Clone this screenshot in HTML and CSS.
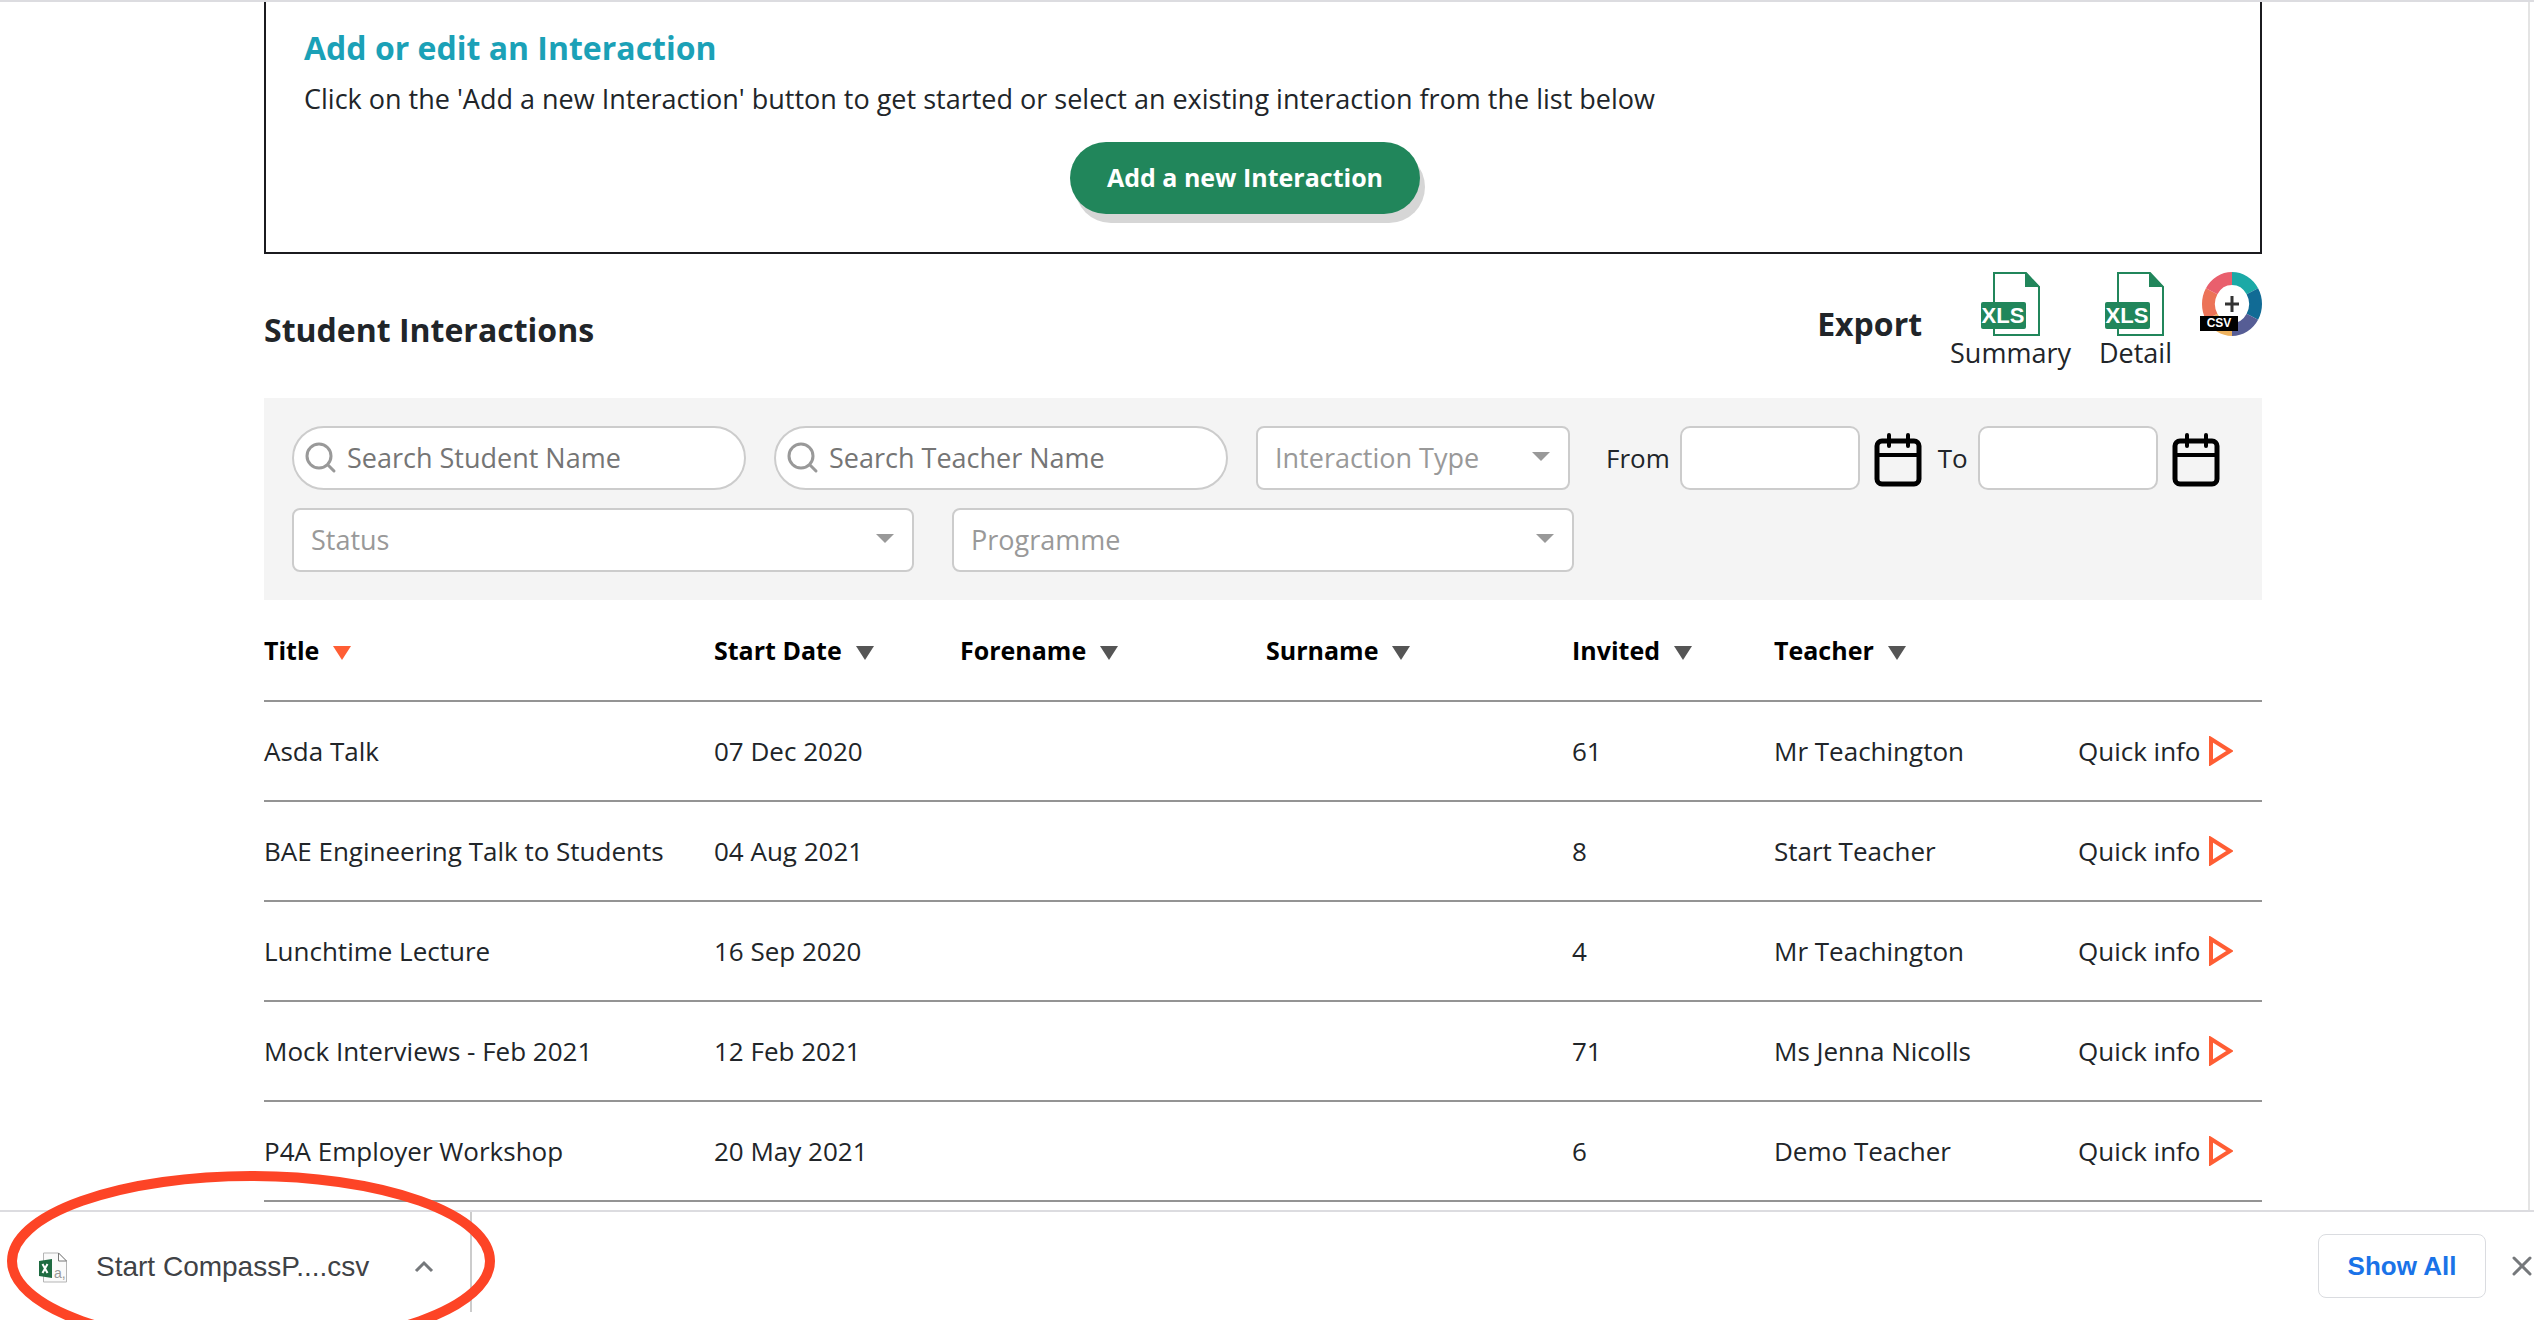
FILE: index.html
```
<!DOCTYPE html>
<html lang="en">
<head>
	<meta charset="UTF-8">
	<title>Student Interactions</title>
	<link rel="stylesheet" href="styles.css">
</head>
<body>
	<svg class="sprite" aria-hidden="true">
		<symbol id="search" viewBox="0 0 32 32">
			<circle cx="14" cy="14" r="12" fill="none" stroke="#999" stroke-width="3"/>
			<path d="M23 23l6 6" stroke="#999" stroke-width="3" stroke-linecap="round"/>
		</symbol>
		<symbol id="calendar" viewBox="0 0 48 54">
			<rect x="3" y="8" width="42" height="43" rx="5" fill="none" stroke="#000" stroke-width="5"/>
			<path d="M3 22h42M15 2v11M34 2v11" fill="none" stroke="#000" stroke-width="4" stroke-linecap="round"/>
		</symbol>
		<symbol id="play" viewBox="0 0 24 30">
			<path d="M2 3l19 12L2 27z" fill="#fff" stroke="#ff5e34" stroke-width="4"/>
		</symbol>
	</svg>

	<main class="page">
		<div class="container">
			<section class="intro">
				<h2>Add or edit an Interaction</h2>
				<p>Click on the 'Add a new Interaction' button to get started or select an existing interaction from the list below</p>
				<button type="button" class="btn-add">Add a new Interaction</button>
			</section>

			<div class="list-head">
				<h2>Student Interactions</h2>
				<div class="export">
					<h3>Export</h3>
					<a href="#" class="export-link">
						<svg class="icon-xls" viewBox="0 0 60 64">
							<path d="M13 1h32l13 14v48H13z" fill="#fff" stroke="#21865b" stroke-width="2"/>
							<path d="M44 0v15h15z" fill="#21865b"/>
							<rect x="0" y="30" width="45" height="27" rx="2" fill="#21865b"/>
							<text x="22" y="51" text-anchor="middle" class="xls-text">XLS</text>
						</svg>
						Summary
					</a>
					<a href="#" class="export-link">
						<svg class="icon-xls" viewBox="0 0 60 64">
							<path d="M13 1h32l13 14v48H13z" fill="#fff" stroke="#21865b" stroke-width="2"/>
							<path d="M44 0v15h15z" fill="#21865b"/>
							<rect x="0" y="30" width="45" height="27" rx="2" fill="#21865b"/>
							<text x="22" y="51" text-anchor="middle" class="xls-text">XLS</text>
						</svg>
						Detail
					</a>
					<a href="#" aria-label="Export CSV">
						<svg class="icon-csv" viewBox="0 0 62 64">
							<g fill="none" stroke-width="13">
								<path d="M32 6.500A23.500 25.500 0 0 1 52.350 19.250" stroke="#1ba9a6"/>
								<path d="M52.350 19.250A23.500 25.500 0 0 1 52.350 44.750" stroke="#116b95"/>
								<path d="M52.350 44.750A23.500 25.500 0 0 1 32 57.500" stroke="#565d95"/>
								<path d="M32 57.500A23.500 25.500 0 0 1 11.650 44.750" stroke="#eeb25f"/>
								<path d="M11.650 44.750A23.500 25.500 0 0 1 11.650 19.250" stroke="#ec7357"/>
								<path d="M11.650 19.250A23.500 25.500 0 0 1 32 6.500" stroke="#e95f6d"/>
							</g>
							<path d="M32 24v16M25 32h14" stroke="#333" stroke-width="3"/>
							<rect x="0" y="44" width="38" height="15"/>
							<text x="19" y="55" text-anchor="middle" class="csv-text">CSV</text>
						</svg>
					</a>
				</div>
			</div>

			<form class="filters">
				<div class="filter-row">
					<label class="search">
						<svg class="icon-search"><use href="#search"/></svg>
						<input type="text" placeholder="Search Student Name" aria-label="Search Student Name">
					</label>
					<label class="search">
						<svg class="icon-search"><use href="#search"/></svg>
						<input type="text" placeholder="Search Teacher Name" aria-label="Search Teacher Name">
					</label>
					<div class="select select-type">
						<select aria-label="Interaction Type"><option>Interaction Type</option></select>
					</div>
					<div class="dates">
						<label for="from">From</label>
						<input type="text" id="from">
						<button type="button" aria-label="Pick from date"><svg class="icon-calendar"><use href="#calendar"/></svg></button>
						<label for="to">To</label>
						<input type="text" id="to">
						<button type="button" aria-label="Pick to date"><svg class="icon-calendar"><use href="#calendar"/></svg></button>
					</div>
				</div>
				<div class="filter-row filter-row-wide">
					<div class="select">
						<select aria-label="Status"><option>Status</option></select>
					</div>
					<div class="select">
						<select aria-label="Programme"><option>Programme</option></select>
					</div>
				</div>
			</form>

			<table class="interactions">
				<colgroup>
					<col class="col-title">
					<col class="col-date">
					<col class="col-name">
					<col class="col-name">
					<col class="col-invited">
					<col class="col-teacher">
					<col>
				</colgroup>
				<thead>
					<tr>
						<th class="sorted">Title</th>
						<th>Start Date</th>
						<th>Forename</th>
						<th>Surname</th>
						<th>Invited</th>
						<th>Teacher</th>
						<td></td>
					</tr>
				</thead>
				<tbody>
					<tr>
						<td>Asda Talk</td><td>07 Dec 2020</td><td></td><td></td><td>61</td><td>Mr Teachington</td>
						<td><a href="#" class="quick">Quick info<svg class="icon-play"><use href="#play"/></svg></a></td>
					</tr>
					<tr>
						<td>BAE Engineering Talk to Students</td><td>04 Aug 2021</td><td></td><td></td><td>8</td><td>Start Teacher</td>
						<td><a href="#" class="quick">Quick info<svg class="icon-play"><use href="#play"/></svg></a></td>
					</tr>
					<tr>
						<td>Lunchtime Lecture</td><td>16 Sep 2020</td><td></td><td></td><td>4</td><td>Mr Teachington</td>
						<td><a href="#" class="quick">Quick info<svg class="icon-play"><use href="#play"/></svg></a></td>
					</tr>
					<tr>
						<td>Mock Interviews - Feb 2021</td><td>12 Feb 2021</td><td></td><td></td><td>71</td><td>Ms Jenna Nicolls</td>
						<td><a href="#" class="quick">Quick info<svg class="icon-play"><use href="#play"/></svg></a></td>
					</tr>
					<tr>
						<td>P4A Employer Workshop</td><td>20 May 2021</td><td></td><td></td><td>6</td><td>Demo Teacher</td>
						<td><a href="#" class="quick">Quick info<svg class="icon-play"><use href="#play"/></svg></a></td>
					</tr>
				</tbody>
			</table>
		</div>
	</main>

	<footer class="downloads">
		<div class="download">
			<svg class="icon-file" viewBox="0 0 28 31">
				<path d="M4.500 1h15l8 8v21h-23z" fill="#fafafa" stroke="#b5b5b5"/>
				<path d="M19.500 1v8h8z" fill="#fff" stroke="#777"/>
				<path d="M0 9l13-2v19L0 24z" fill="#1e6b41"/>
				<path d="M3.500 12l5 9M8.500 12l-5 9" stroke="#fff" stroke-width="2"/>
				<text x="15" y="26" class="file-text">a,</text>
			</svg>
			<a href="#">Start CompassP....csv</a>
			<button type="button" aria-label="More options">
				<svg class="icon-chevron" viewBox="0 0 20 20"><path d="M2 14l8-8 8 8" fill="none" stroke="#75787b" stroke-width="3"/></svg>
			</button>
		</div>
		<button type="button" class="btn-all">Show All</button>
		<button type="button" aria-label="Close">
			<svg class="icon-close" viewBox="0 0 20 20"><path d="M2 2l16 16M18 2L2 18" stroke="#75787b" stroke-width="3" stroke-linecap="round"/></svg>
		</button>
		<svg class="marker" viewBox="0 0 490 180"><ellipse cx="245" cy="90" rx="239" ry="85" fill="none" stroke="#fd4426" stroke-width="10"/></svg>
	</footer>
</body>
</html>
```
FILE: styles.css
```
*{
	box-sizing: border-box;
	margin: 0;
	padding: 0;
}
body{
	display: flex;
	flex-direction: column;
	height: 100vh;
	overflow: hidden;
	border-top: 2px solid #dcdce0;
	background: #fff;
	color: #212529;
	font-family: "Open Sans", sans-serif;
	font-size: 26px;
	line-height: 36px;
}
a{
	color: inherit;
	text-decoration: none;
}
button, input, select{
	font: inherit;
	color: inherit;
}
button{
	border: 0;
	background: none;
	cursor: pointer;
}
svg{
	display: block;
	flex: none;
}
.sprite{
	position: absolute;
	width: 0;
	height: 0;
}
.page{
	flex: 1;
	min-height: 0;
	overflow: hidden;
	margin-right: 4px;
	padding: 0 18px 0 16px;
	border-right: 2px solid #e4e4e4;
}
.container{
	max-width: 1998px;
	margin: 0 auto;
}
h2{
	font-size: 32px;
	font-weight: bold;
	line-height: 48px;
}

/* intro box */
.intro{
	display: flex;
	flex-direction: column;
	padding: 22px 38px 38px;
	border: 2px solid #1b1b1f;
	border-top: 0;
}
.intro h2{
	color: #1ba1b7;
}
.intro p{
	margin: 8px 0 24px;
	line-height: 38px;
	font-size: 27px;
}
.btn-add{
	align-self: center;
	width: 350px;
	height: 72px;
	margin-right: 36px;
	padding-bottom: 2px;
	border-radius: 36px;
	background: #21865b;
	box-shadow: 5px 9px 0 #d6d6d6;
	color: #fff;
	font-size: 25px;
	font-weight: bold;
}

/* title + export */
.list-head{
	display: flex;
	justify-content: space-between;
	align-items: center;
	height: 144px;
	padding-top: 8px;
}
.export{
	display: flex;
	align-items: flex-start;
	height: 116px;
	gap: 28px;
}
.export h3{
	padding-top: 30px;
	font-size: 32px;
	font-weight: bold;
	line-height: 44px;
}
.export-link{
	display: flex;
	flex-direction: column;
	align-items: center;
	font-size: 27px;
	line-height: 34px;
}
.icon-xls{
	width: 60px;
	height: 64px;
}
.icon-csv{
	width: 62px;
	height: 64px;
}
.xls-text{
	fill: #fff;
	font: bold 22px "Liberation Sans", sans-serif;
}
.csv-text{
	fill: #fff;
	font: bold 12px "Liberation Sans", sans-serif;
}

/* filters */
.filters{
	display: grid;
	gap: 18px;
	padding: 28px;
	background: #f4f4f4;
}
.filter-row{
	display: flex;
	gap: 28px;
}
.filter-row-wide{
	gap: 38px;
}
.search{
	display: flex;
	align-items: center;
	gap: 10px;
	width: 454px;
	height: 64px;
	padding: 0 11px;
	border: 2px solid #ccc;
	border-radius: 32px;
	background: #fff;
}
.search input{
	flex: 1;
	min-width: 0;
	border: 0;
	outline: 0;
	background: none;
	font-size: 27px;
}
.search input::placeholder{
	color: #757575;
}
.icon-search{
	width: 32px;
	height: 32px;
}
.select{
	position: relative;
	width: 622px;
}
.select-type{
	width: 314px;
}
.select select{
	width: 100%;
	height: 64px;
	padding: 0 17px;
	appearance: none;
	border: 2px solid #ccc;
	border-radius: 8px;
	background: #fff;
	color: #999;
	font-size: 27px;
}
.select::after{
	content: "";
	position: absolute;
	right: 20px;
	top: 26px;
	border: 9px solid transparent;
	border-top-color: #999;
	border-bottom: 0;
	pointer-events: none;
}
.dates{
	display: flex;
	align-items: center;
	gap: 10px;
	margin-left: 8px;
}
.dates input{
	width: 180px;
	height: 64px;
	border: 2px solid #ccc;
	border-radius: 10px;
	background: #fff;
}
.dates button{
	padding: 4px 6px 0 4px;
}
.icon-calendar{
	width: 48px;
	height: 54px;
}

/* table */
.interactions{
	width: 100%;
	table-layout: fixed;
	border-collapse: collapse;
}
.interactions tr{
	height: 100px;
	border-bottom: 2px solid #949494;
}
.interactions thead tr{
	height: 101px;
}
.interactions th{
	color: #000;
	font-size: 25px;
	font-weight: bold;
	text-align: left;
}
.interactions th::after{
	content: "";
	display: inline-block;
	margin-left: 14px;
	border: 9px solid transparent;
	border-top: 14px solid #555;
	border-bottom: 0;
}
.interactions .sorted::after{
	border-top-color: #ff5e34;
}
.interactions td{
	white-space: nowrap;
}
.col-title{ width: 450px; }
.col-date{ width: 246px; }
.col-name{ width: 306px; }
.col-invited{ width: 202px; }
.col-teacher{ width: 304px; }
.quick{
	display: flex;
	align-items: center;
	gap: 8px;
}
.icon-play{
	width: 24px;
	height: 30px;
}

/* download bar */
.downloads{
	position: relative;
	display: flex;
	align-items: center;
	height: 110px;
	padding-right: 2px;
	border-top: 2px solid #dcdce0;
	background: #fff;
	font-family: "Liberation Sans", sans-serif;
}
.download{
	display: flex;
	align-self: flex-start;
	align-items: center;
	width: 472px;
	height: 100px;
	padding: 10px 0 0 39px;
	border-right: 2px solid #ccc;
	color: #3f4246;
	font-size: 28px;
}
.download a{
	margin: 0 45px 0 29px;
}
.icon-file{
	width: 28px;
	height: 31px;
}
.file-text{
	fill: #999;
	font: 14px "Liberation Sans", sans-serif;
}
.icon-chevron, .icon-close{
	width: 20px;
	height: 20px;
}
.btn-all{
	width: 168px;
	height: 64px;
	margin: 0 26px 0 auto;
	border: 1px solid #dadce0;
	border-radius: 8px;
	color: #1a73e8;
	font-weight: bold;
}
.marker{
	position: absolute;
	left: 6px;
	top: -41px;
	width: 490px;
	height: 180px;
	pointer-events: none;
}
```
